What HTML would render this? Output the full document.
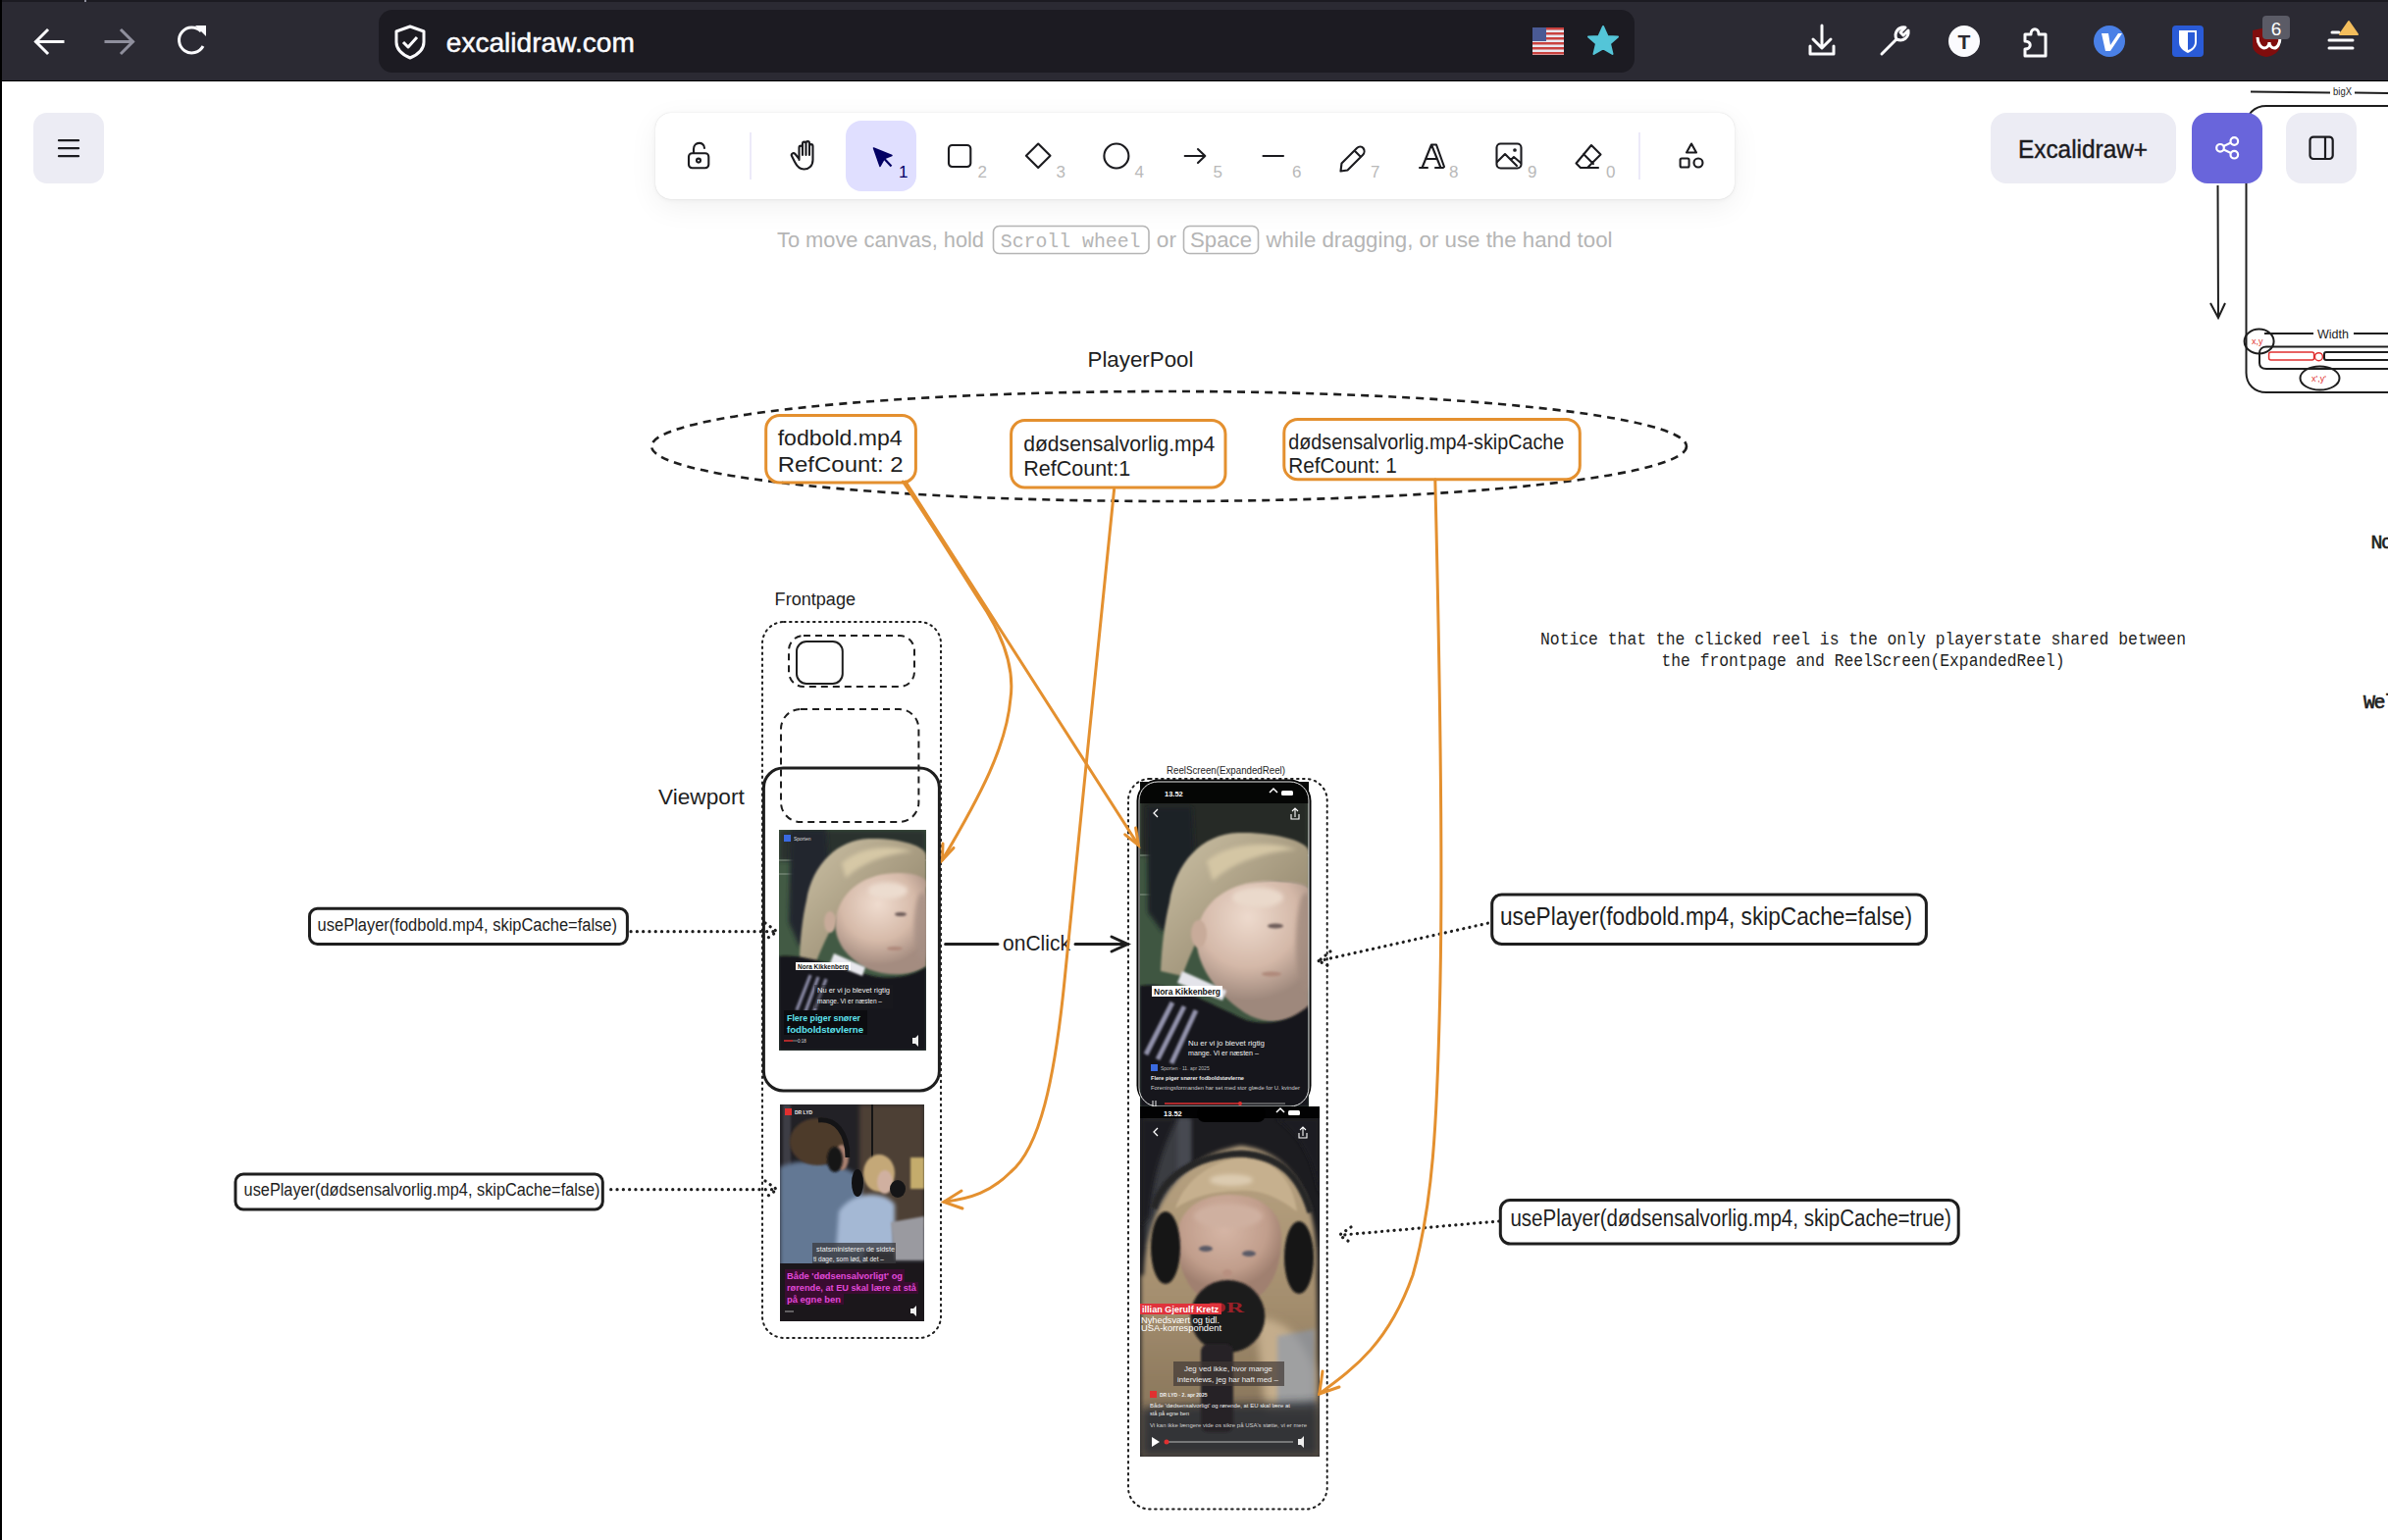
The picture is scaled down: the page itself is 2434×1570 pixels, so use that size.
<!DOCTYPE html>
<html><head><meta charset="utf-8">
<style>
html,body{margin:0;padding:0;width:2434px;height:1570px;overflow:hidden;background:#fff;font-family:"Liberation Sans",sans-serif;}
.abs{position:absolute;}
#top{position:absolute;left:0;top:0;width:2434px;height:83px;background:#2b2a33;}
#top .strip{position:absolute;left:0;top:0;width:2434px;height:2px;background:#1c1b22;}
#top .bline{position:absolute;left:0;top:82px;width:2434px;height:1px;background:#000;}
#leftbar{position:absolute;left:0;top:0;width:2px;height:1570px;background:#000;}
#url{position:absolute;left:386px;top:10px;width:1280px;height:64px;border-radius:14px;background:#1c1b22;}
#urltext{position:absolute;left:455px;top:26px;font-size:27px;color:#fbfbfe;letter-spacing:0px;}
.island{position:absolute;background:#fff;border-radius:16px;box-shadow:0 0 1px rgba(0,0,0,.17),0 1px 5px rgba(0,0,0,.05),0 8px 30px rgba(0,0,0,.06);}
.btn{position:absolute;background:#ececf4;border-radius:16px;}
.num{position:absolute;font-size:18px;color:#b0b0b8;}
#hint{position:absolute;left:792px;top:228px;font-size:22.5px;color:#b8b8b8;white-space:nowrap;}
</style></head>
<body>
<svg id="diagram" class="abs" style="left:0;top:0" width="2434" height="1570" viewBox="0 0 2434 1570">
<!-- ===== Photo 1: frontpage football girl ===== -->
<g clip-path="url(#cp1)">
  <rect x="794" y="846" width="150" height="225" fill="#425a44"/>
  <rect x="794" y="846" width="150" height="32" fill="#2b312d" filter="url(#b2)"/>
  <path d="M794 877H944M794 891H850" stroke="#8a9a8a" stroke-width="1"/>
  <path d="M806 846L842 846L846 895L836 950L815 965L804 940Z" fill="#24272d" filter="url(#b2)"/>
  <path d="M822 918C828 880 855 856 885 855C915 854 944 862 944 872L944 905C925 896 895 895 872 912C855 928 842 955 830 985L815 982C815 960 818 935 822 918Z" fill="url(#hair1)" filter="url(#b1)"/>
  <path d="M858 880C875 864 905 860 930 868C905 870 880 878 862 895Z" fill="#d6c8a6" filter="url(#b2)"/>
  <path d="M852 935C858 905 885 890 915 890C935 890 944 895 944 900L944 985C930 995 905 996 885 988C865 978 848 960 852 935Z" fill="url(#face1)" filter="url(#b1)"/>
  <ellipse cx="940" cy="945" rx="8" ry="35" fill="#a68f84" opacity="0.8" filter="url(#b2)"/>
  <ellipse cx="905" cy="908" rx="20" ry="8" fill="#ecdccf" filter="url(#b2)"/>
  <ellipse cx="846" cy="940" rx="6" ry="11" fill="#c8ab9a" filter="url(#b1)"/>
  <ellipse cx="918" cy="932" rx="6" ry="2" fill="#6e5d5a" filter="url(#b1)"/>
  <ellipse cx="912" cy="967" rx="8" ry="2" fill="#b08a7c" filter="url(#b1)"/>
  <path d="M794 975C820 972 850 985 890 995C915 1000 935 992 944 986V1071H794Z" fill="#17171b" filter="url(#b1)"/>
  <path d="M850 972L882 986L879 995L846 982Z" fill="#e8e8ee" filter="url(#b1)"/>
  <g stroke="#9a9ab8" stroke-width="3.2" filter="url(#b1)" opacity="0.9"><path d="M826 994L812 1030M834 996L820 1034M842 998L828 1036"/></g>
  <rect x="811" y="981" width="56" height="8" fill="#fff"/>
  <text x="813" y="987.5" font-family="Liberation Sans" font-weight="bold" font-size="6.5" fill="#111" textLength="52" lengthAdjust="spacingAndGlyphs">Nora Kikkenberg</text>
  <rect x="830" y="1004" width="80" height="24" fill="#1a1a1e" opacity="0.45"/>
  <text x="833" y="1012" font-family="Liberation Sans" font-size="7" fill="#eee" textLength="74" lengthAdjust="spacingAndGlyphs">Nu er vi jo blevet rigtig</text>
  <text x="833" y="1023" font-family="Liberation Sans" font-size="7" fill="#eee" textLength="66" lengthAdjust="spacingAndGlyphs">mange. Vi er næsten –</text>
  <rect x="799" y="1030" width="85" height="25" fill="#0c0c10"/>
  <text x="802" y="1041" font-family="Liberation Sans" font-weight="bold" font-size="9.5" fill="#5fe3ee" textLength="75" lengthAdjust="spacingAndGlyphs">Flere piger snører</text>
  <text x="802" y="1053" font-family="Liberation Sans" font-weight="bold" font-size="9.5" fill="#5fe3ee" textLength="78" lengthAdjust="spacingAndGlyphs">fodboldstøvlerne</text>
  <rect x="799" y="851" width="7" height="7" fill="#3a6ae0"/>
  <text x="809" y="857" font-family="Liberation Sans" font-size="5" fill="#ddd">Sporten</text>
  <path d="M799 1061H808" stroke="#e03030" stroke-width="1.5"/>
  <path d="M808 1061H813" stroke="#888" stroke-width="1"/>
  <text x="813" y="1063" font-family="Liberation Sans" font-size="4.5" fill="#ddd">0:18</text>
  <path d="M930 1058H933L936 1055V1067L933 1064H930Z" fill="#eee"/>
</g>
<!-- ===== Photo 2: frontpage radio studio ===== -->
<g clip-path="url(#cp2)">
  <rect x="795" y="1126" width="147" height="221" fill="#222126"/>
  <rect x="876" y="1126" width="66" height="125" fill="#4d4035" filter="url(#b2)"/>
  <rect x="798" y="1126" width="8" height="110" fill="#3c3c44" filter="url(#b1)"/>
  <rect x="928" y="1180" width="14" height="32" fill="#c4ac6c" filter="url(#b1)"/>
  <path d="M889 1126V1205" stroke="#151515" stroke-width="2"/>
  <path d="M795 1190C815 1180 850 1182 878 1200L882 1295H795Z" fill="#647894" filter="url(#b2)"/>
  <ellipse cx="833" cy="1164" rx="28" ry="24" fill="#4e3b2c" filter="url(#b1)"/>
  <ellipse cx="858" cy="1180" rx="7" ry="13" fill="#a88070" filter="url(#b1)"/>
  <path d="M834 1142C852 1140 864 1155 864 1180" stroke="#141416" stroke-width="5" fill="none"/>
  <ellipse cx="851" cy="1182" rx="8" ry="13" fill="#141416" filter="url(#b1)"/>
  <path d="M855 1235C868 1215 900 1212 912 1228L912 1275H852Z" fill="#a4b8d4" filter="url(#b2)"/>
  <ellipse cx="896" cy="1196" rx="16" ry="19" fill="#c4a878" filter="url(#b1)"/>
  <ellipse cx="902" cy="1205" rx="8" ry="12" fill="#d0b0a0" filter="url(#b1)"/>
  <ellipse cx="874" cy="1206" rx="6" ry="14" fill="#111113"/>
  <ellipse cx="915" cy="1212" rx="8" ry="9" fill="#151517"/>
  <path d="M908 1246L942 1240V1285H912Z" fill="#9a9aa0" filter="url(#b1)"/>
  <rect x="795" y="1288" width="147" height="59" fill="#1b171b"/>
  <rect x="828" y="1267" width="85" height="21" fill="#3a3a3e" opacity="0.75"/>
  <text x="832" y="1276" font-family="Liberation Sans" font-size="6.5" fill="#eee" textLength="80" lengthAdjust="spacingAndGlyphs">statsministeren de sidste</text>
  <text x="829" y="1286" font-family="Liberation Sans" font-size="6.5" fill="#eee" textLength="72" lengthAdjust="spacingAndGlyphs">ti dage, som lød, at det –</text>
  <rect x="800" y="1294" width="122" height="13" fill="#3a0c30"/>
  <rect x="800" y="1307" width="136" height="12" fill="#3a0c30"/>
  <rect x="800" y="1319" width="60" height="11" fill="#3a0c30"/>
  <g font-family="Liberation Sans" font-weight="bold" font-size="9" fill="#e048d8">
    <text x="802" y="1304" textLength="118" lengthAdjust="spacingAndGlyphs">Både 'dødsensalvorligt' og</text>
    <text x="802" y="1316" textLength="132" lengthAdjust="spacingAndGlyphs">rørende, at EU skal lære at stå</text>
    <text x="802" y="1328" textLength="55" lengthAdjust="spacingAndGlyphs">på egne ben</text>
  </g>
  <rect x="800" y="1130" width="7" height="7" fill="#e03030"/>
  <text x="810" y="1136" font-family="Liberation Sans" font-weight="bold" font-size="5" fill="#eee">DR LYD</text>
  <path d="M800 1337H809" stroke="#aaa" stroke-width="1"/>
  <path d="M928 1334H931L934 1331V1342L931 1339H928Z" fill="#eee"/>
</g>
<!-- ===== Phone 1: reel screen football girl ===== -->
<g>
  <rect x="1158.5" y="794.5" width="178" height="334" rx="22" fill="#000"/>
  <g clip-path="url(#cp3)">
    <rect x="1162" y="797" width="172" height="331" fill="#3f5641"/>
    <rect x="1162" y="797" width="172" height="75" fill="#262b27" filter="url(#b2)"/>
    <path d="M1162 912H1215M1162 872H1334" stroke="#8a9a8a" stroke-width="1"/>
    <path d="M1169 823L1215 823L1218 880L1208 930L1185 950L1170 930Z" fill="#1f2127" filter="url(#b2)"/>
    <path d="M1192 920C1198 880 1225 850 1262 849C1300 848 1334 858 1334 868L1334 905C1310 895 1275 895 1250 915C1232 932 1218 960 1205 995L1183 990C1184 965 1187 940 1192 920Z" fill="url(#hair1)" filter="url(#b1)"/>
    <path d="M1230 878C1250 860 1290 856 1322 866C1290 868 1258 878 1236 898Z" fill="#d4c6a4" filter="url(#b2)"/>
    <path d="M1220 950C1226 915 1258 898 1295 898C1320 898 1334 902 1334 906L1334 1030C1318 1042 1295 1045 1275 1036C1248 1022 1215 985 1220 950Z" fill="url(#face3)" filter="url(#b1)"/>
    <ellipse cx="1331" cy="960" rx="10" ry="50" fill="#a08a7e" opacity="0.8" filter="url(#b2)"/>
    <ellipse cx="1282" cy="915" rx="26" ry="10" fill="#ead9cb" filter="url(#b2)"/>
    <ellipse cx="1222" cy="952" rx="8" ry="14" fill="#c8ab9a" filter="url(#b1)"/>
    <ellipse cx="1300" cy="944" rx="8" ry="2.5" fill="#6e5d5a" filter="url(#b1)"/>
    <ellipse cx="1296" cy="993" rx="10" ry="2.5" fill="#b08a7c" filter="url(#b1)"/>
    <path d="M1162 1005C1195 1000 1230 1022 1270 1040C1300 1048 1322 1036 1334 1025V1128H1162Z" fill="#15151a" filter="url(#b1)"/>
    <path d="M1205 990L1250 1010L1246 1020L1200 1002Z" fill="#e4e4ea" filter="url(#b1)"/>
    <g stroke="#a0a0bc" stroke-width="5" filter="url(#b1)" opacity="0.9"><path d="M1195 1022L1168 1075M1207 1026L1180 1080M1219 1030L1194 1084"/></g>
    <rect x="1174" y="1005" width="72" height="11" fill="#fff"/>
    <text x="1176" y="1014" font-family="Liberation Sans" font-weight="bold" font-size="9" fill="#111" textLength="68" lengthAdjust="spacingAndGlyphs">Nora Kikkenberg</text>
    <text x="1211" y="1066" font-family="Liberation Sans" font-size="7.5" fill="#eee" textLength="78" lengthAdjust="spacingAndGlyphs">Nu er vi jo blevet rigtig</text>
    <text x="1211" y="1076" font-family="Liberation Sans" font-size="7.5" fill="#eee" textLength="72" lengthAdjust="spacingAndGlyphs">mange. Vi er næsten –</text>
    <rect x="1173" y="1085" width="7" height="7" fill="#3a6ae0"/>
    <text x="1183" y="1091" font-family="Liberation Sans" font-size="5" fill="#bbb">Sporten · 11. apr 2025</text>
    <text x="1173" y="1101" font-family="Liberation Sans" font-weight="bold" font-size="5.5" fill="#eee" textLength="95" lengthAdjust="spacingAndGlyphs">Flere piger snører fodboldstøvlerne</text>
    <text x="1173" y="1111" font-family="Liberation Sans" font-size="5" fill="#ccc" textLength="152" lengthAdjust="spacingAndGlyphs">Foreningsformanden har set med stor glæde for U. kvinder</text>
    <path d="M1187 1125H1264" stroke="#e03030" stroke-width="1.5"/>
    <path d="M1264 1125H1310" stroke="#999" stroke-width="1"/>
    <circle cx="1264" cy="1125" r="2" fill="#e03030"/>
    <path d="M1175 1122V1128M1178 1122V1128" stroke="#eee" stroke-width="1"/>
    <rect x="1162" y="797" width="172" height="22" fill="#000" opacity="0.85"/>
  </g>
  <rect x="1161" y="797" width="173" height="331" rx="19" fill="none" stroke="#e8e8e8" stroke-width="1"/>
  <text x="1187" y="812" font-family="Liberation Sans" font-weight="bold" font-size="7.5" fill="#fff">13.52</text>
  <rect x="1306" y="806" width="12" height="5" rx="1.5" fill="#fff"/>
  <path d="M1294 808L1298 804L1302 808" stroke="#fff" stroke-width="1.5" fill="none"/>
  <path d="M1180 825L1176 829L1180 833" stroke="#fff" stroke-width="1.3" fill="none"/>
  <path d="M1320 833V825M1317 827L1320 824L1323 827M1316 830V835H1324V830" stroke="#fff" stroke-width="1.1" fill="none"/>
</g>
<!-- ===== Phone 2: reel screen radio woman ===== -->
<g clip-path="url(#cp4)">
  <rect x="1162" y="1128" width="183" height="357" fill="#1c1c20"/>
  <rect x="1167" y="1140" width="46" height="165" fill="#3b3d43" filter="url(#b2)"/>
  <rect x="1200" y="1140" width="14" height="165" fill="#474a51" filter="url(#b2)"/>
  <path d="M1166 1300C1168 1240 1195 1180 1265 1168C1325 1175 1345 1235 1342 1300L1345 1485H1163V1300Z" fill="url(#hair4)" filter="url(#b2)"/>
  <path d="M1163 1140H1200C1185 1170 1175 1200 1172 1240L1163 1250Z M1345 1140H1300C1330 1160 1340 1190 1345 1220Z" fill="#1c1c20" filter="url(#b2)"/>
  <path d="M1198 1232C1208 1200 1240 1182 1268 1180C1300 1182 1318 1205 1322 1235C1300 1218 1280 1212 1262 1214C1238 1214 1215 1220 1198 1232Z" fill="#c6b08e" filter="url(#b1)"/>
  <ellipse cx="1255" cy="1203" rx="22" ry="6" fill="#dccbb0" filter="url(#b2)"/>
  <path d="M1280 1345C1300 1340 1330 1360 1340 1400L1340 1440H1290Z" fill="#c4ad8c" filter="url(#b4)"/>
  <path d="M1176 1232C1185 1200 1218 1178 1265 1176C1305 1178 1325 1200 1336 1236" stroke="#262628" stroke-width="7" fill="none" filter="url(#b1)"/>
  <path d="M1200 1262C1200 1232 1225 1218 1253 1218C1283 1218 1306 1232 1306 1262C1306 1300 1290 1330 1253 1332C1216 1330 1200 1300 1200 1262Z" fill="url(#face4)" filter="url(#b1)"/>
  <ellipse cx="1252" cy="1240" rx="35" ry="12" fill="#cfb0a0" filter="url(#b2)"/>
  <ellipse cx="1188" cy="1272" rx="15" ry="37" fill="#151517" filter="url(#b1)"/>
  <ellipse cx="1324" cy="1282" rx="15" ry="37" fill="#151517" filter="url(#b1)"/>
  <ellipse cx="1229" cy="1273" rx="7" ry="3" fill="#5a5a66" filter="url(#b1)"/>
  <ellipse cx="1273" cy="1278" rx="7" ry="3" fill="#5a5a66" filter="url(#b1)"/>
  <ellipse cx="1251" cy="1298" rx="5" ry="4" fill="#b89080" filter="url(#b1)"/>
  <path d="M1302 1362L1340 1355V1436H1302Z" fill="#8898b0" opacity="0.6" filter="url(#b2)"/>
  <path d="M1163 1436C1200 1430 1300 1432 1345 1428V1485H1163Z" fill="#272a32" opacity="0.85" filter="url(#b4)"/>
  <ellipse cx="1251.3" cy="1342" rx="38" ry="37" fill="#1c1a1c" filter="url(#b1)"/>
  <text x="1232" y="1338" font-family="Liberation Serif" font-weight="bold" font-size="14" fill="#9a2028" textLength="36" lengthAdjust="spacingAndGlyphs">DR</text>
  <rect x="1224" y="1370" width="33" height="90" rx="8" fill="#262426" filter="url(#b1)"/>
  <rect x="1162" y="1329" width="83" height="11" fill="#e0333c"/>
  <text x="1164" y="1338" font-family="Liberation Sans" font-weight="bold" font-size="9.5" fill="#fff" textLength="78" lengthAdjust="spacingAndGlyphs">illian Gjerulf Kretz</text>
  <text x="1163" y="1349" font-family="Liberation Sans" font-size="9" fill="#fff" textLength="80" lengthAdjust="spacingAndGlyphs">Nyhedsvært og tidl.</text>
  <text x="1163" y="1357" font-family="Liberation Sans" font-size="9" fill="#fff" textLength="82" lengthAdjust="spacingAndGlyphs">USA-korrespondent</text>
  <rect x="1196" y="1388" width="113" height="25" fill="#403834" opacity="0.7"/>
  <text x="1207" y="1398" font-family="Liberation Sans" font-size="8" fill="#eee" textLength="90" lengthAdjust="spacingAndGlyphs">Jeg ved ikke, hvor mange</text>
  <text x="1200" y="1409" font-family="Liberation Sans" font-size="8" fill="#eee" textLength="103" lengthAdjust="spacingAndGlyphs">interviews, jeg har haft med –</text>
  <rect x="1172" y="1418" width="7" height="7" fill="#e03030"/>
  <text x="1182" y="1424" font-family="Liberation Sans" font-weight="bold" font-size="5" fill="#eee">DR LYD · 2. apr 2025</text>
  <text x="1172" y="1435" font-family="Liberation Sans" font-size="5.5" fill="#eee" textLength="143" lengthAdjust="spacingAndGlyphs">Både 'dødsensalvorligt' og rørende, at EU skal lære at</text>
  <text x="1172" y="1443" font-family="Liberation Sans" font-size="5.5" fill="#eee" textLength="40" lengthAdjust="spacingAndGlyphs">stå på egne ben</text>
  <text x="1172" y="1455" font-family="Liberation Sans" font-size="5" fill="#ccc" textLength="160" lengthAdjust="spacingAndGlyphs">Vi kan ikke længere vide os sikre på USA's støtte, vi er mere</text>
  <path d="M1174 1465V1475L1182 1470Z" fill="#fff"/>
  <path d="M1190 1470H1318" stroke="#bbb" stroke-width="1"/>
  <circle cx="1189" cy="1470" r="2.5" fill="#e03030"/>
  <path d="M1323 1467H1326L1329 1464V1476L1326 1473H1323Z" fill="#eee"/>
  <rect x="1162" y="1128" width="183" height="12" fill="#000" opacity="0.9"/>
  <rect x="1220" y="1128" width="70" height="16" rx="8" fill="#000"/>
  <text x="1186" y="1138" font-family="Liberation Sans" font-weight="bold" font-size="7.5" fill="#fff">13.52</text>
  <rect x="1313" y="1132" width="12" height="5" rx="1.5" fill="#fff"/>
  <path d="M1301 1134L1305 1130L1309 1134" stroke="#fff" stroke-width="1.5" fill="none"/>
  <path d="M1180 1150L1176 1154L1180 1158" stroke="#fff" stroke-width="1.3" fill="none"/>
  <path d="M1328 1158V1150M1325 1152L1328 1149L1331 1152M1324 1155V1160H1332V1155" stroke="#fff" stroke-width="1.1" fill="none"/>
</g>
<defs>
  <radialGradient id="face1" cx="895" cy="922" r="62" gradientUnits="userSpaceOnUse"><stop offset="0" stop-color="#efdccf"/><stop offset="0.6" stop-color="#d6baa9"/><stop offset="1" stop-color="#a48c80"/></radialGradient>
  <radialGradient id="face3" cx="1272" cy="935" r="85" gradientUnits="userSpaceOnUse"><stop offset="0" stop-color="#eddacd"/><stop offset="0.6" stop-color="#d4b8a8"/><stop offset="1" stop-color="#9e887c"/></radialGradient>
  <radialGradient id="face4" cx="1248" cy="1252" r="62" gradientUnits="userSpaceOnUse"><stop offset="0" stop-color="#d6b6a6"/><stop offset="0.7" stop-color="#c19e8c"/><stop offset="1" stop-color="#a08070"/></radialGradient>
  <linearGradient id="hair1" x1="0" y1="0" x2="1" y2="1"><stop offset="0" stop-color="#cdc2a6"/><stop offset="1" stop-color="#867960"/></linearGradient>
  <linearGradient id="hair4" x1="0" y1="0" x2="0" y2="1"><stop offset="0" stop-color="#b8a382"/><stop offset="0.5" stop-color="#a48e6e"/><stop offset="1" stop-color="#7e6c54"/></linearGradient>
  <filter id="b1" x="-50%" y="-50%" width="200%" height="200%"><feGaussianBlur stdDeviation="1"/></filter>
  <filter id="b2" x="-50%" y="-50%" width="200%" height="200%"><feGaussianBlur stdDeviation="2"/></filter>
  <filter id="b4" x="-50%" y="-50%" width="200%" height="200%"><feGaussianBlur stdDeviation="4"/></filter>
  <filter id="b7" x="-50%" y="-50%" width="200%" height="200%"><feGaussianBlur stdDeviation="7"/></filter>
  <clipPath id="cp1"><rect x="794" y="846" width="150" height="225"/></clipPath>
  <clipPath id="cp2"><rect x="795" y="1126" width="147" height="221"/></clipPath>
  <clipPath id="cp3"><rect x="1162" y="797" width="172" height="331"/></clipPath>
  <clipPath id="cp4"><rect x="1162" y="1128" width="183" height="357"/></clipPath>
</defs>
<g font-family="Liberation Sans" fill="#1e1e1e">
  <!-- PlayerPool -->
  <text x="1108.5" y="374" font-size="22.5" textLength="108" lengthAdjust="spacingAndGlyphs">PlayerPool</text>
</g>
<ellipse cx="1191.5" cy="455" rx="527.5" ry="56" fill="none" stroke="#1e1e1e" stroke-width="2.6" stroke-dasharray="8 6"/>
<g fill="none" stroke="#e4902f" stroke-width="3">
  <rect x="780.7" y="423.5" width="152.7" height="68.5" rx="14"/>
  <rect x="1030.6" y="428.5" width="218.4" height="68.5" rx="14"/>
  <rect x="1308.8" y="427.4" width="301.5" height="61.3" rx="14"/>
</g>
<g font-family="Liberation Sans" fill="#1e1e1e" font-size="22.5">
  <text x="792.7" y="454.4" textLength="127" lengthAdjust="spacingAndGlyphs">fodbold.mp4</text>
  <text x="792.7" y="480.8" textLength="128" lengthAdjust="spacingAndGlyphs">RefCount: 2</text>
  <text x="1043.2" y="460" textLength="195" lengthAdjust="spacingAndGlyphs">dødsensalvorlig.mp4</text>
  <text x="1043.2" y="485" textLength="109" lengthAdjust="spacingAndGlyphs">RefCount:1</text>
  <text x="1313.3" y="458" textLength="281" lengthAdjust="spacingAndGlyphs">dødsensalvorlig.mp4-skipCache</text>
  <text x="1313.3" y="482" textLength="110.6" lengthAdjust="spacingAndGlyphs">RefCount: 1</text>
</g>
<!-- Frontpage group -->
<g font-family="Liberation Sans" fill="#1e1e1e">
  <text x="789.6" y="616.5" font-size="18" textLength="82.4" lengthAdjust="spacingAndGlyphs">Frontpage</text>
  <text x="671" y="819.6" font-size="22.8" textLength="87.8" lengthAdjust="spacingAndGlyphs">Viewport</text>
  <text x="1022" y="968.8" font-size="21.7" textLength="69" lengthAdjust="spacingAndGlyphs">onClick</text>
  <text x="1189" y="788.7" font-size="11" textLength="121" lengthAdjust="spacingAndGlyphs">ReelScreen(ExpandedReel)</text>
</g>
<g fill="none" stroke="#1e1e1e">
  <rect x="777" y="634" width="182" height="730" rx="22" stroke-width="2" stroke-dasharray="1.6 4.4" stroke-linecap="round"/>
  <rect x="804" y="648" width="128" height="52" rx="15" stroke-width="2" stroke-dasharray="7 5"/>
  <rect x="812" y="654" width="46.8" height="43" rx="10" stroke-width="2"/>
  <rect x="796" y="723" width="140.4" height="115" rx="20" stroke-width="2" stroke-dasharray="7 5"/>
  <rect x="778.4" y="783" width="179" height="329" rx="20" stroke-width="3"/>
  <!-- reel screen dotted -->
  <rect x="1150" y="794" width="202.7" height="744.6" rx="22" stroke-width="2" stroke-dasharray="1.6 4.4" stroke-linecap="round"/>
</g>
<!-- left boxes -->
<g fill="none" stroke="#1e1e1e" stroke-width="3">
  <rect x="315.5" y="926.3" width="323.9" height="36.2" rx="8"/>
  <rect x="240" y="1197" width="374.3" height="36" rx="8"/>
  <rect x="1520.7" y="911.9" width="442.7" height="50.7" rx="10"/>
  <rect x="1529.3" y="1223.5" width="466.9" height="44.5" rx="10"/>
</g>
<g font-family="Liberation Sans" fill="#1e1e1e">
  <text x="323.6" y="949" font-size="18" textLength="305.4" lengthAdjust="spacingAndGlyphs">usePlayer(fodbold.mp4, skipCache=false)</text>
  <text x="248.6" y="1218.7" font-size="18" textLength="362.9" lengthAdjust="spacingAndGlyphs">usePlayer(dødsensalvorlig.mp4, skipCache=false)</text>
  <text x="1529" y="942.6" font-size="25.5" textLength="420" lengthAdjust="spacingAndGlyphs">usePlayer(fodbold.mp4, skipCache=false)</text>
  <text x="1539.4" y="1250.3" font-size="23" textLength="449.5" lengthAdjust="spacingAndGlyphs">usePlayer(dødsensalvorlig.mp4, skipCache=true)</text>
</g>
<!-- dotted arrows -->
<g fill="none" stroke="#1e1e1e" stroke-width="3.2" stroke-dasharray="0.1 6.2" stroke-linecap="round">
  <path d="M643 949.7H792"/>
  <path d="M622.7 1212.7H792"/>
  <path d="M1516.4 941.2L1344 979.7"/>
  <path d="M1527.8 1245L1365 1259.3"/>
  <path d="M780 941L792 949.7L780 958"/>
  <path d="M780 1204L792 1212.7L780 1221"/>
  <path d="M1356 970L1344 979.7L1357 986"/>
  <path d="M1377 1251L1365 1259.3L1377 1267"/>
</g>
<!-- onClick arrow -->
<g fill="none" stroke="#1e1e1e" stroke-width="3" stroke-linecap="round">
  <path d="M963.6 962.6H1017M1096 962.6H1149"/>
  <path d="M1133 955L1149.4 962.6L1133 970"/>
</g>
<!-- orange arrows -->
<g fill="none" stroke="#e4902f" stroke-width="3" stroke-linecap="round">
  <path d="M920.4 491C960 550 990 600 1006 624C1028 660 1033 690 1030 712C1026 760 1000 810 960.5 876.7"/>
  <path d="M923 491L1160.4 861.7"/>
  <path d="M1135.6 499C1120 650 1100 850 1085 1000C1075 1100 1060 1170 1030 1195C1010 1215 990 1222 962 1225.3"/>
  <path d="M1462.8 489C1468 700 1470 900 1468 1000C1465 1150 1460 1230 1440 1300C1415 1370 1380 1395 1344.8 1421"/>
  <path d="M961 860L960.5 876.7L972 864.4"/>
  <path d="M1157.6 844L1160.4 861.7L1146.7 850.8"/>
  <path d="M980 1214L962 1225.3L981 1232"/>
  <path d="M1348 1398L1344.8 1421L1365 1414"/>
</g>
<!-- notice text -->
<g font-family="Liberation Mono" fill="#1e1e1e" font-size="18" text-anchor="middle">
  <text x="1899" y="656.7" textLength="658" lengthAdjust="spacingAndGlyphs">Notice that the clicked reel is the only playerstate shared between</text>
  <text x="1899" y="678.8" textLength="411" lengthAdjust="spacingAndGlyphs">the frontpage and ReelScreen(ExpandedReel)</text>
</g>
<g font-family="Liberation Mono" fill="#1e1e1e" font-size="20">
  <text x="2416.5" y="559" stroke="#1e1e1e" stroke-width="0.6" letter-spacing="-1.6">Notice</text>
  <text x="2409" y="722" stroke="#1e1e1e" stroke-width="0.6" letter-spacing="-1.6">Welcome</text>
</g>
<!-- top-right mini diagram -->
<g fill="none" stroke="#1e1e1e" stroke-width="2">
  <path d="M2294 93.5L2375 94.5M2400 94.5L2434 95"/>
  <path d="M2434 108H2310C2298 108 2289.5 116 2289.5 128V380C2289.5 392 2298 400 2310 400H2434"/>
  <path d="M2260.5 189L2261 324M2253 309L2261 324L2268 309"/>
  <path d="M2308 340H2358M2399 340H2434"/>
  <path d="M2434 353.5H2310C2306 353.5 2303 356 2303 360V370C2303 374 2306 376 2310 376H2434"/>
  <ellipse cx="2302.6" cy="348" rx="15" ry="12.5"/>
  <ellipse cx="2364.5" cy="385.5" rx="20" ry="12"/>
  <rect x="2369" y="359" width="70" height="8" rx="2"/>
</g>
<g fill="none" stroke="#e03131" stroke-width="1.5">
  <rect x="2312.6" y="359" width="46" height="8" rx="2"/>
  <circle cx="2363.4" cy="363.7" r="4"/>
</g>
<g font-family="Liberation Sans" fill="#1e1e1e" font-size="11">
  <text x="2378" y="97" textLength="19" lengthAdjust="spacingAndGlyphs">bigX</text>
  <text x="2362" y="344.5" font-size="12.5" textLength="32" lengthAdjust="spacingAndGlyphs">Width</text>
</g>
<g font-family="Liberation Sans" fill="#e03131" font-size="9">
  <text x="2295" y="351">x,y</text>
  <text x="2356" y="389">x',y'</text>
</g>

</svg>

<div id="top"><div class="strip"></div><div class="bline"></div>
  <div class="abs" style="left:86px;top:0;width:2px;height:2px;background:#8f8f9d"></div>
  <div id="url"></div>
  <svg class="abs" style="left:440px;top:20px" width="260" height="50" viewBox="440 20 260 50"><text x="454.8" y="53.4" font-family="Liberation Sans" font-size="28.5" fill="#fbfbfe" stroke="#fbfbfe" stroke-width="0.5" textLength="192" lengthAdjust="spacingAndGlyphs">excalidraw.com</text></svg>
  <svg class="abs" style="left:0;top:0" width="2434" height="82" viewBox="0 0 2434 82">
    <g fill="none" stroke="#fbfbfe" stroke-width="3" stroke-linecap="square">
      <path d="M64 42.5H37M48 31L36.5 42.5L48 54"/>
    </g>
    <g fill="none" stroke="#8f8f9d" stroke-width="3" stroke-linecap="square">
      <path d="M108 42.5H135M124 31L135.5 42.5L124 54"/>
    </g>
    <g fill="none" stroke="#fbfbfe" stroke-width="3">
      <path d="M205 32A13 13 0 1 0 207 47" />
      <path d="M199 26L210 26L210 37Z" fill="#fbfbfe" stroke="none"/>
    </g>
    <g fill="none" stroke="#fbfbfe" stroke-width="3" stroke-linejoin="round">
      <path d="M418 27L432 32V43C432 51 425 56 418 59C411 56 404 51 404 43V32Z"/>
      <path d="M411 43L416 48L425 38"/>
    </g>
    <!-- flag -->
    <g>
      <rect x="1562" y="28" width="32" height="28" fill="#e8e8f0"/>
      <rect x="1562" y="28" width="32" height="2.5" fill="#c9423f"/>
      <rect x="1562" y="33" width="32" height="2.5" fill="#c9423f"/>
      <rect x="1562" y="38" width="32" height="2.5" fill="#c9423f"/>
      <rect x="1562" y="43" width="32" height="2.5" fill="#c9423f"/>
      <rect x="1562" y="48" width="32" height="2.5" fill="#c9423f"/>
      <rect x="1562" y="53" width="32" height="2.5" fill="#c9423f"/>
      <rect x="1562" y="28" width="14" height="14" fill="#4a5a94"/>
    </g>
    <path d="M1634 27L1638.5 37L1649 37.5L1641 44.5L1643.5 55L1634 49.5L1624.5 55L1627 44.5L1619 37.5L1629.5 37Z" fill="#54c5d8" stroke="#54c5d8" stroke-width="2" stroke-linejoin="round"/>
    <!-- right icons -->
    <g fill="none" stroke="#fbfbfe" stroke-width="3" stroke-linecap="round" stroke-linejoin="round">
      <path d="M1857 26V48M1848 40L1857 49L1866 40M1845 47V55H1869V47"/>
      <path d="M1918 55L1933 40M1933 40C1930 33 1935 27 1942 28L1937 33L1940 36L1945 31C1946 38 1940 43 1933 40"/>
      <path d="M2064 35H2070C2070 28 2078 28 2078 35H2085V57H2064V50C2071 50 2071 42 2064 42Z"/>
      <path d="M2377 33H2384M2374 41H2398M2374 49H2398"/>
    </g>
    <circle cx="2002" cy="42" r="16" fill="#fbfbfe"/>
    <text x="2002" y="50" font-family="Liberation Sans" font-weight="bold" font-size="21" fill="#2b2a33" text-anchor="middle">T</text>
    <circle cx="2150" cy="42" r="16" fill="#4a80e6"/>
    <path d="M2142 34L2149 34L2151 46L2159 34L2163 34L2151 52L2146 52Z" fill="#fff"/>
    <rect x="2214" y="26" width="32" height="32" rx="4" fill="#2a5bd7"/>
    <path d="M2221 31H2239V43C2239 49 2234 52 2230 54C2226 52 2221 49 2221 43Z" fill="#fff"/>
    <path d="M2230 33H2237V43C2237 47 2234 50 2230 51Z" fill="#2a5bd7"/>
    <path d="M2296 31L2310 28L2324 31V46C2324 53 2317 57 2310 58C2303 57 2296 53 2296 46Z" fill="#800d0d"/>
    <path d="M2301 38C2301 45 2305 49 2308 49C2311 49 2313 46 2313 43C2313 46 2315 49 2318 49C2321 49 2324 45 2324 38" stroke="#fff" stroke-width="3" fill="none"/>
    <rect x="2306" y="16" width="28" height="24" rx="4" fill="#5b5b66"/>
    <text x="2320" y="36" font-family="Liberation Sans" font-size="19" fill="#fff" text-anchor="middle">6</text>
    <path d="M2394 22L2403 35H2385Z" fill="#f3bd5c" stroke="#f3bd5c" stroke-width="2" stroke-linejoin="round"/>
  </svg>
</div>
<div id="leftbar"></div>

<!-- hamburger -->
<div class="btn" style="left:34px;top:115px;width:72px;height:72px;border-radius:14px;"></div>
<svg class="abs" style="left:34px;top:115px" width="72" height="72"><g stroke="#1b1b1f" stroke-width="2.3" stroke-linecap="round"><path d="M26 28.2H46M26 36.2H46M26 44.2H46"/></g></svg>

<!-- toolbar -->
<div class="island" style="left:668px;top:115px;width:1100px;height:88px;border-radius:16px;"></div>
<div class="abs" style="left:862px;top:123px;width:72px;height:72px;border-radius:16px;background:#e0dfff"></div>



<svg class="abs" style="left:0;top:200px" width="2434" height="70" viewBox="0 200 2434 70">
  <g font-family="Liberation Sans" font-size="22.5" fill="#b5b5b5">
    <text x="792" y="252" textLength="211" lengthAdjust="spacingAndGlyphs">To move canvas, hold</text>
    <text x="1178.8" y="252" textLength="20.2" lengthAdjust="spacingAndGlyphs">or</text>
    <text x="1290.5" y="252" textLength="353" lengthAdjust="spacingAndGlyphs">while dragging, or use the hand tool</text>
    <text x="1213" y="252" textLength="63" lengthAdjust="spacingAndGlyphs">Space</text>
  </g>
  <text x="1019.8" y="252" font-family="Liberation Mono" font-size="20" fill="#b5b5b5" textLength="142.7" lengthAdjust="spacingAndGlyphs">Scroll wheel</text>
  <g fill="none" stroke="#b5b5b5" stroke-width="1.6">
    <rect x="1012.5" y="230.5" width="158.5" height="28" rx="6"/>
    <rect x="1206.5" y="230.5" width="76" height="28" rx="6"/>
  </g>
</svg>

<!-- right buttons -->
<div class="btn" style="left:2029px;top:115px;width:189px;height:72px;border-radius:16px;"></div>
<svg class="abs" style="left:2040px;top:125px" width="170" height="50" viewBox="2040 125 170 50"><text x="2057" y="161" font-family="Liberation Sans" font-size="25" fill="#1b1b1f" stroke="#1b1b1f" stroke-width="0.4" textLength="132" lengthAdjust="spacingAndGlyphs">Excalidraw+</text></svg>
<div class="abs" style="left:2234px;top:115px;width:72px;height:72px;border-radius:16px;background:#6965db"></div>
<div class="btn" style="left:2330px;top:115px;width:72px;height:72px;border-radius:16px;"></div>
<svg class="abs" style="left:0;top:0" width="2434" height="260" viewBox="0 0 2434 260">
  <g fill="none" stroke="#1b1b1f" stroke-width="2.1" stroke-linecap="round" stroke-linejoin="round">
    <rect x="702" y="156.2" width="20.3" height="15" rx="3.5"/>
    <path d="M707 156V152C707 144 718 144 718 151"/>
    <circle cx="712" cy="163.6" r="2" fill="none"/>
    <g transform="translate(3.5 0)"><path d="M811 163V150.5C811 148 814.5 148 814.5 150.5V158M814.5 150V146.5C814.5 144 818 144 818 146.5V158M818 147V146C818 143.5 821.5 143.5 821.5 146V158M821.5 149C821.5 146.5 825 146.5 825 149V163C825 169 821 172.5 816 172.5C811 172.5 808.5 169 806.5 165L803.5 159C802.5 157 805 155 807 157L811 162"/></g>
    <rect x="967" y="148" width="22.3" height="22" rx="3.5"/>
    <path d="M1058.2 146.6L1070.5 158.8L1058.2 171L1045.9 158.8Z"/>
    <circle cx="1137.9" cy="159" r="12.5"/>
    <path d="M1207.7 159H1228.3M1221 152L1228.3 159L1221 166"/>
    <path d="M1287.5 159H1308"/>
    <path d="M1367.5 166.5L1383 151C1385 149 1388 149 1389.5 151C1391 153 1391 156 1389 158L1373.5 173.5L1366.5 174.5Z M1380.5 153.5L1387 160"/>
    <path d="M1447 171H1455M1463 171H1471M1449.5 171L1459 147.5L1468.5 171M1453 162H1465M1459 147.5L1464 147.5L1472 170"/>
    <rect x="1525.5" y="146.5" width="25" height="25" rx="4"/>
    <path d="M1526 165L1534 157L1546 169M1540 163L1543 160L1550 166"/>
    <circle cx="1544" cy="153" r="0.8" fill="#1b1b1f"/>
    <path d="M1622 148L1631.5 157.5L1618 171H1611L1606.5 166.5Z M1614 157L1624 167 M1618 171H1629"/>
    <path d="M1724 146.5L1729 155.5H1719Z"/>
    <rect x="1712.6" y="161.5" width="9" height="9" rx="1.5"/>
    <circle cx="1731" cy="166" r="4.5"/>
  </g>
  <path d="M890.5 151L909 158.5L901.5 161.5L897 169.5Z" fill="#030064" stroke="#030064" stroke-width="1.5" stroke-linejoin="round"/><path d="M901 161.5L908.5 169.5" stroke="#030064" stroke-width="2.2"/>
  <g stroke="#e6e4f7" stroke-width="1.5"><path d="M765 135V183M1671 135V183"/></g>
  <g font-family="Liberation Sans" font-size="17" fill="#b9b9b9">
    <text x="916" y="181" fill="#030064">1</text>
    <text x="996.5" y="181">2</text>
    <text x="1076.5" y="181">3</text>
    <text x="1156.5" y="181">4</text>
    <text x="1236.5" y="181">5</text>
    <text x="1317" y="181">6</text>
    <text x="1397" y="181">7</text>
    <text x="1477" y="181">8</text>
    <text x="1557" y="181">9</text>
    <text x="1637" y="181">0</text>
  </g>
  <g fill="none" stroke="#fff" stroke-width="2.2">
    <circle cx="2277.3" cy="144" r="3.8"/>
    <circle cx="2263" cy="150.8" r="3.8"/>
    <circle cx="2277.3" cy="157.7" r="3.8"/>
    <path d="M2266.5 149L2273.8 145.5M2266.5 152.5L2273.8 156"/>
  </g>
  <g fill="none" stroke="#1b1b1f" stroke-width="2.2">
    <rect x="2354.5" y="139.6" width="23.2" height="22.4" rx="3.5"/>
    <path d="M2370 139.6V162"/>
  </g>
</svg>

</body></html>
